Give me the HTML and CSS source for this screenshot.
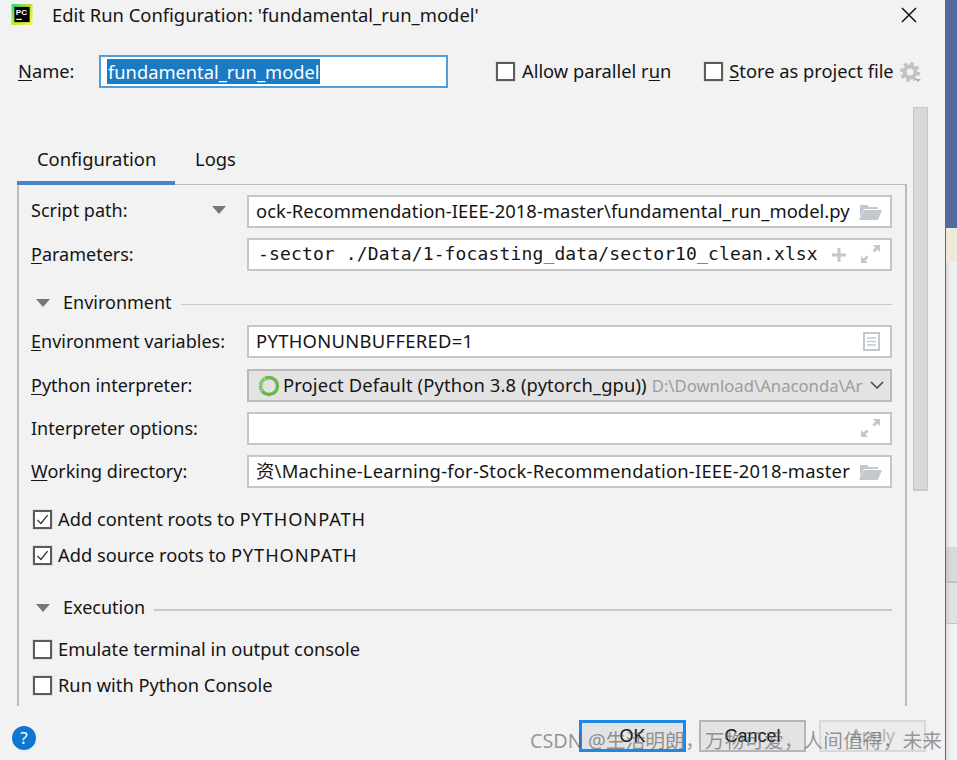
FILE: index.html
```html
<!DOCTYPE html>
<html lang="en">
<head>
<meta charset="utf-8">
<title>Edit Run Configuration</title>
<link rel="stylesheet" href="styles.css">
</head>
<body>
<div class="screen">
  <main class="dialog">
    <header class="titlebar">
      <svg class="logo" viewBox="0 0 22 22" width="22" height="21">
        <defs><linearGradient id="pcg" x1="0" y1="0" x2="1" y2="1"><stop offset="0" stop-color="#21d789"/><stop offset=".45" stop-color="#b7e62a"/><stop offset="1" stop-color="#fcf84a"/></linearGradient></defs>
        <rect width="22" height="22" fill="url(#pcg)"/>
        <rect x="3" y="3" width="16" height="16" fill="#000"/>
        <text x="4.500" y="11" class="logo-text">PC</text>
        <rect x="5" y="15.500" width="6" height="1.200" fill="#fff"/>
      </svg>
      <span class="title">Edit Run Configuration: 'fundamental_run_model'</span>
      <svg class="close" viewBox="0 0 16 16" width="16" height="16"><path d="M1 1 15 15M15 1 1 15" stroke="#111" stroke-width="1.500" fill="none"/></svg>
    </header>

    <section class="namebar">
      <label class="name-label"><u>N</u>ame:</label>
      <div class="name-input"><span class="selected">fundamental_run_model</span></div>
      <span class="box allow-box"></span><span class="opt">Allow parallel r<u>u</u>n</span>
      <span class="box store-box"></span><span class="opt"><u>S</u>tore as project file</span>
      <svg class="gear" viewBox="0 0 22 22" width="22" height="22">
        <circle cx="10" cy="10" r="5.500" fill="none" stroke="#bfc3c5" stroke-width="4"/>
        <circle cx="10" cy="10" r="8.300" fill="none" stroke="#bfc3c5" stroke-width="3.400" stroke-dasharray="3.500 3.020"/>
        <path d="M15 17h6l-3 3z" fill="#a8abae"/>
      </svg>
    </section>

    <div class="content">
      <div class="left">
        <nav class="tabs">
          <span class="tab active">Configuration</span>
          <span class="tab">Logs</span>
        </nav>
        <div class="panel">
          <div class="row">
            <span class="label label-arrow">Script path:<i class="tri"></i></span>
            <div class="field"><span class="val val-path">ock-Recommendation-IEEE-2018-master\fundamental_run_model.py</span>
              <svg class="ic folder" viewBox="0 0 23 16" width="23" height="16"><path fill="#c2c8cd" d="M1 1h7l2 2h9v2H5L1 13z"/><path fill="#c2c8cd" d="M5 6h18l-4 10H0z"/></svg>
            </div>
          </div>
          <div class="row mt10">
            <span class="label"><u>P</u>arameters:</span>
            <div class="field"><span class="val mono">-sector ./Data/1-focasting_data/sector10_clean.xlsx</span>
              <svg class="ic plus" viewBox="0 0 16 16" width="16" height="16"><path d="M8 1v14M1 8h14" stroke="#c4c8cb" stroke-width="3" fill="none"/></svg>
              <svg class="ic expand" viewBox="0 0 19 18" width="19" height="18"><path fill="#c2c8cd" d="M12 0h7v7l-2.500-2.500-3 3-2-2 3-3zM0 18v-7l2.500 2.500 3-3 2 2-3 3L7 18z"/></svg>
            </div>
          </div>

          <div class="section env"><i class="tri"></i><span class="section-name">Environment</span><span class="rule"></span></div>

          <div class="row mt10">
            <span class="label"><u>E</u>nvironment variables:</span>
            <div class="field"><span class="val val-plain">PYTHONUNBUFFERED=1</span>
              <svg class="ic doc" viewBox="0 0 17 19" width="17" height="19"><path fill="none" stroke="#c2c8cd" stroke-width="2" d="M1 1h15v17H1z"/><path stroke="#c2c8cd" stroke-width="1.300" d="M4 6h9M4 9.500h9M4 13h9"/></svg>
            </div>
          </div>
          <div class="row mt11">
            <span class="label"><u>P</u>ython interpreter:</span>
            <div class="field combo">
              <svg class="spin" viewBox="0 0 22 22" width="22" height="22"><circle cx="11" cy="11" r="8.500" fill="none" stroke="#6cb74c" stroke-width="3.400"/><path d="M4.500 16A8.500 8.500 0 0 1 8 3" fill="none" stroke="#a3d18d" stroke-width="3.400" stroke-dasharray="1.600 1"/></svg>
              <span class="combo-text">Project Default (Python 3.8 (pytorch_gpu))</span>
              <span class="combo-path">D:\Download\Anaconda\Ar</span>
              <svg class="chev" viewBox="0 0 14 8" width="14" height="8"><path d="M1 1l6 6 6-6" fill="none" stroke="#444" stroke-width="1.500"/></svg>
            </div>
          </div>
          <div class="row mt10">
            <span class="label">Interpreter options:</span>
            <div class="field">
              <svg class="ic expand" viewBox="0 0 19 18" width="19" height="18"><path fill="#c2c8cd" d="M12 0h7v7l-2.500-2.500-3 3-2-2 3-3zM0 18v-7l2.500 2.500 3-3 2 2-3 3L7 18z"/></svg>
            </div>
          </div>
          <div class="row mt10">
            <span class="label"><u>W</u>orking directory:</span>
            <div class="field"><span class="val val-work">资\Machine-Learning-for-Stock-Recommendation-IEEE-2018-master</span>
              <svg class="ic folder" viewBox="0 0 23 16" width="23" height="16"><path fill="#c2c8cd" d="M1 1h7l2 2h9v2H5L1 13z"/><path fill="#c2c8cd" d="M5 6h18l-4 10H0z"/></svg>
            </div>
          </div>

          <div class="check c1"><span class="box on"><svg viewBox="0 0 19 19" width="15" height="15"><path d="M3 10l4.500 4.500L16 4" fill="none" stroke="#333" stroke-width="1.700"/></svg></span><span class="check-text">Add content roots to <span class="caps">PYTHONPATH</span></span></div>
          <div class="check c2"><span class="box on"><svg viewBox="0 0 19 19" width="15" height="15"><path d="M3 10l4.500 4.500L16 4" fill="none" stroke="#333" stroke-width="1.700"/></svg></span><span class="check-text">Add source roots to <span class="caps">PYTHONPATH</span></span></div>

          <div class="section exec"><i class="tri"></i><span class="section-name">Execution</span><span class="rule thick"></span></div>

          <div class="check c3"><span class="box"></span><span class="check-text">Emulate terminal in output console</span></div>
          <div class="check c2"><span class="box"></span><span class="check-text">Run with Python Console</span></div>
        </div>
      </div>
      <div class="scrollbar"></div>
    </div>

    <footer class="footer">
      <span class="help">?</span>
      <span class="btn primary">OK</span>
      <span class="btn">Cancel</span>
      <span class="btn disabled">Apply</span>
    </footer>
  </main>
  <aside class="backdrop">
    <div class="bd-blue"></div>
    <div class="bd-cream"></div>
    <div class="bd-light"></div>
    <div class="bd-gray"></div>
    <div class="bd-gray2"></div>
    <div class="bd-rest"></div>
  </aside>
  <div class="watermark">CSDN @生活明朗，万物可爱，人间值得，未来</div>
</div>
</body>
</html>
```

FILE: styles.css
```css
* { box-sizing: border-box; }
html, body { margin: 0; padding: 0; }
body {
  width: 957px;
  height: 760px;
  overflow: hidden;
  font-family: "Noto Sans", "Noto Sans CJK SC", sans-serif;
  font-size: 18.4px;
  color: #151515;
  background: #f2f2f2;
}
u { text-underline-offset: 2px; }
.screen { position: relative; display: flex; width: 957px; height: 760px; }
.dialog {
  width: 946px;
  height: 760px;
  background: #f2f2f2;
  border-right: 1px solid #666;
  display: flex;
  flex-direction: column;
}

/* title */
.titlebar { height: 30px; display: flex; align-items: center; padding: 0 28px 0 11px; flex: none; }
.logo { flex: none; margin-top: -1px; }
.logo-text { font: 700 8.500px "Liberation Sans", sans-serif; fill: #fff; }
.title { margin-left: 19px; margin-top: -2px; white-space: nowrap; }
.close { margin-left: auto; }

/* name row */
.namebar { height: 33px; margin-top: 25px; display: flex; align-items: center; flex: none; padding-left: 18px; font-size: 18.300px; }
.name-label { width: 81px; margin-top: -2px; }
.name-input {
  width: 349px;
  height: 33px;
  border: 2px solid #4c9fdf;
  background: #fff;
  padding: 0 0 0 6px;
  display: flex;
  align-items: center;
}
.selected { background: #1a7ac4; color: #fff; line-height: 25px; height: 25px; padding: 0 1px; white-space: nowrap; }
.box {
  display: inline-flex;
  align-items: center;
  justify-content: center;
  width: 19px;
  height: 19px;
  flex: none;
  background: #fff;
  border: 2px solid #5c5c5c;
  box-shadow: 0 0 0 .5px #ccc;
}
.allow-box { margin-left: 48px; margin-top: -1px; }
.store-box { margin-left: 33px; margin-top: -1px; }
.opt { margin-left: 7px; margin-top: -2px; white-space: nowrap; }
.store-box + .opt { margin-left: 6px; }
.gear { margin-left: 6px; margin-top: 2px; flex: none; }

/* body */
.content { display: flex; margin-top: 19px; flex: none; height: 599px; }
.left { width: 907px; padding: 33px 0 0 17px; flex: none; }
.tabs { height: 45px; display: flex; border-bottom: 1px solid #bcbcbc; }
.tab { height: 45px; padding: 6px 20px 0; line-height: 25px; }
.tab.active { width: 158px; border-bottom: 4px solid #4a83c8; text-align: center; }
.panel {
  height: 521px;
  border-left: 2px solid #bcbcbc;
  border-right: 2px solid #bcbcbc;
  padding: 10px 13px 0 12px;
}
.scrollbar {
  width: 15px;
  height: 384px;
  margin-left: 6px;
  background: #d8d8d8;
  border: 1px solid #c8c8c8;
  border-bottom-width: 2px;
}

/* form rows */
.row { display: flex; height: 33px; align-items: center; }
.mt10 { margin-top: 10px; }
.mt11 { margin-top: 11px; }
.label { width: 216px; flex: none; white-space: nowrap; margin-top: -2px; font-size: 18px; }
.label-arrow { display: flex; align-items: center; justify-content: space-between; padding-right: 21px; margin-top: -4px; }
.tri { display: block; width: 0; height: 0; flex: none; border-left: 7px solid transparent; border-right: 7px solid transparent; border-top: 8px solid #777; }
.field {
  flex: 1;
  height: 33px;
  background: #fff;
  border: 2px solid #c6c6c6;
  position: relative;
  display: flex;
  align-items: center;
  padding: 0 0 2px 7px;
  white-space: nowrap;
  overflow: hidden;
}
.val { display: block; }
.val-path { margin-top: -1px; letter-spacing: .035px; }
.val-work { margin-top: -1px; letter-spacing: .2px; }
.val-plain { letter-spacing: .3px; margin-top: -1px; }
.mono { font-family: "DejaVu Sans Mono", monospace; font-size: 18px; letter-spacing: .14px; margin-left: 2px; }
.ic { position: absolute; }
.folder { right: 8px; top: 7px; }
.plus { right: 43px; top: 7px; }
.expand { right: 10px; top: 5px; }
.doc { right: 10px; top: 5px; }
.combo { background: #e3e3e3; border-color: #bababa; padding-left: 9px; }
.spin { flex: none; margin-top: 2px; }
.combo-text { margin-left: 3px; letter-spacing: .11px; }
.combo-path { color: #9c9c9c; margin-left: 5px; margin-top: 2px; font-size: 16.700px; flex: none; }
.chev { position: absolute; right: 6px; top: 10px; }

/* section headers */
.section { display: flex; align-items: center; height: 24px; padding-left: 5px; font-size: 18px; }
.section .tri { margin-right: 13px; }
.section-name { margin-top: -2px; }
.rule { flex: 1; height: 1px; background: #c9c9c9; margin-left: 9px; margin-top: 3px; }
.rule.thick { height: 2px; }
.env { margin-top: 20px; }
.exec { margin-top: 31px; }

/* checkboxes */
.check { display: flex; align-items: center; height: 19px; padding-left: 2px; white-space: nowrap; font-size: 18.300px; }
.check .box { margin-right: 6px; }
.check-text { margin-top: -2px; }
.caps { letter-spacing: .9px; }
.c1 { margin-top: 22px; }
.c2 { margin-top: 17px; }
.c3 { margin-top: 20px; }

/* footer */
.footer { flex: 1; position: relative; display: flex; align-items: flex-start; padding: 14px 0 0 12px; }
.help {
  width: 24px; height: 24px; margin-top: 6px; border-radius: 50%;
  background: #0f76d2; color: #fff; font-size: 17px; line-height: 24px; text-align: center; flex: none;
}
.btn {
  width: 107px;
  height: 32px;
  margin-left: 13px;
  background: #e3e3e3;
  border: 2px solid #b5b5b5;
  font-family: "Liberation Sans", sans-serif;
  font-size: 18px;
  line-height: 28px;
  text-align: center;
  flex: none;
}
.btn.primary { margin-left: 543px; border: 3px solid #1a8ae6; line-height: 26px; }
.btn.disabled { color: #b5b5b5; background: #ececec; border-color: #d8d8d8; }

/* backdrop strip */
.backdrop { flex: 1; display: flex; flex-direction: column; }
.bd-blue { height: 228px; background: #536b9c; }
.bd-cream { height: 34px; background: #efe9d9; }
.bd-light { height: 285px; background: linear-gradient(90deg, #d9d9d9, #f0f0f0 5px); }
.bd-gray { height: 36px; background: linear-gradient(90deg, #c4c4c4, #dadada 5px); border-bottom: 2px solid #c0c0c0; }
.bd-gray2 { height: 41px; background: linear-gradient(90deg, #cfcfcf, #e2e2e2 5px); border-bottom: 1px solid #c4c4c4; }
.bd-rest { flex: 1; background: linear-gradient(90deg, #dcdcdc, #f2f2f2 5px); }

/* CSDN watermark over the footer */
.watermark {
  position: absolute;
  left: 530px;
  top: 727px;
  font-family: "Noto Sans", "Noto Sans CJK SC", sans-serif;
  font-size: 19.800px;
  line-height: 28px;
  color: rgba(90, 90, 90, .62);
  white-space: nowrap;
}
```
